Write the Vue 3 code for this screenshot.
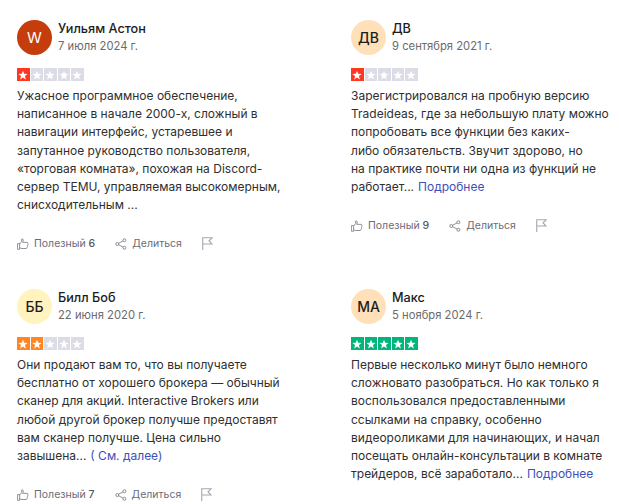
<template>
  <div class="reviews">
    <article v-for="r in reviews" :key="r.name" class="review">
      <header class="head">
        <div class="avatar" :class="r.tone">{{ r.initials }}</div>
        <div class="who">
          <div class="name">{{ r.name }}</div>
          <div class="date">{{ r.date }}</div>
        </div>
      </header>
      <div class="stars">
        <span v-for="n in 5" :key="n" class="star" :class="n <= r.rating ? 'on-' + r.rating : ''">
          <svg viewBox="0 0 24 24" width="10" height="10"><path fill="#fff" d="M12 1.5l2.9 7.6 8.1.4-6.3 5.1 2.1 7.9L12 18.1l-6.8 4.4 2.1-7.9L1 9.5l8.1-.4z"/></svg>
        </span>
      </div>
      <p class="text">
        <template v-for="(line, i) in r.lines" :key="i">{{ line }}<br v-if="i < r.lines.length - 1" /></template>
        <a v-if="r.more" class="more">{{ r.more }}</a>
      </p>
      <footer class="actions">
        <span class="act useful">
          <svg viewBox="0 0 16 16" width="12" height="12" fill="none" stroke="#6b6b78" stroke-width="1"><path d="M.5 7.5h3v7.5h-3zM3.5 8l2.7-3.2V1.6c0-.7 1.7-.8 2 .6.2 1-.2 2.6-.5 3.6h5.6c1.4 0 1.6 1.7.7 2.2.8.5.7 1.8-.2 2.1.5.7.3 1.7-.5 2 .3.9-.2 1.9-1.3 1.9H6.5c-1.2 0-2-.8-3-.8"/></svg>
          <span>Полезный <b>{{ r.useful }}</b></span>
        </span>
        <span class="act share">
          <svg viewBox="0 0 16 16" width="12" height="12" fill="none" stroke="#6b6b78" stroke-width="1"><circle cx="3" cy="8" r="2"/><circle cx="12.5" cy="3" r="2"/><circle cx="12.5" cy="13" r="2"/><path d="M4.8 7l5.9-3.1M4.8 9l5.9 3.1"/></svg>
          <span>Делиться</span>
        </span>
        <svg class="flag" viewBox="0 0 12 14" width="11" height="13" fill="none" stroke="#a6a6b4" stroke-width="1.2"><path d="M.8 14V.8h10.2L7.6 4l3.4 3.6H.8"/></svg>
      </footer>
    </article>
  </div>
</template>

<script setup>
const reviews = [
  {
    name: 'Уильям Астон',
    initials: 'W',
    tone: 'rust',
    date: '7 июля 2024 г.',
    rating: 1,
    useful: 6,
    lines: [
      'Ужасное программное обеспечение,',
      'написанное в начале 2000-х, сложный в',
      'навигации интерфейс, устаревшее и',
      'запутанное руководство пользователя,',
      '«торговая комната», похожая на Discord-',
      'сервер TEMU, управляемая высокомерным,',
      'снисходительным ...'
    ]
  },
  {
    name: 'ДВ',
    initials: 'ДВ',
    tone: 'peach',
    date: '9 сентября 2021 г.',
    rating: 1,
    useful: 9,
    lines: [
      'Зарегистрировался на пробную версию',
      'Tradeideas, где за небольшую плату можно',
      'попробовать все функции без каких-',
      'либо обязательств. Звучит здорово, но',
      'на практике почти ни одна из функций не',
      'работает...'
    ],
    more: 'Подробнее'
  },
  {
    name: 'Билл Боб',
    initials: 'ББ',
    tone: 'yellow',
    date: '22 июня 2020 г.',
    rating: 2,
    useful: 7,
    lines: [
      'Они продают вам то, что вы получаете',
      'бесплатно от хорошего брокера — обычный',
      'сканер для акций. Interactive Brokers или',
      'любой другой брокер получше предоставят',
      'вам сканер получше. Цена сильно',
      'завышена...'
    ],
    more: '( См. далее)'
  },
  {
    name: 'Макс',
    initials: 'МА',
    tone: 'peach',
    date: '5 ноября 2024 г.',
    rating: 5,
    useful: 0,
    lines: [
      'Первые несколько минут было немного',
      'сложновато разобраться. Но как только я',
      'воспользовался предоставленными',
      'ссылками на справку, особенно',
      'видеороликами для начинающих, и начал',
      'посещать онлайн-консультации в комнате',
      'трейдеров, всё заработало...'
    ],
    more: 'Подробнее'
  }
]
</script>

<style>
html, body {
  background: #fff;
  overflow: hidden;
}
</style>

<style scoped>
.reviews {
  display: grid;
  grid-template-columns: 334px 268px;
  grid-template-rows: 269px 269px;
  padding: 20px 0 0 17px;
  width: 619px;
  height: 504px;
  box-sizing: border-box;
  overflow: hidden;
  font-family: Inter, "Liberation Sans", sans-serif;
  color: #1c1c1c;
}

.review {
  display: flex;
  flex-direction: column;
}

.head {
  display: flex;
  gap: 6px;
  align-items: flex-start;
}

.avatar {
  width: 35px;
  height: 35px;
  border-radius: 50%;
  display: flex;
  align-items: center;
  justify-content: center;
  font-size: 14px;
  font-weight: 500;
  flex: none;
}

.avatar.rust {
  background: #c53d0c;
  color: #fff;
  font-size: 15px;
  font-weight: 400;
}

.avatar.peach {
  background: #ffe0b8;
}

.avatar.yellow {
  background: #fff3bf;
}

.name {
  font-size: 12.7px;
  font-weight: 500;
  line-height: 17px;
}

.date {
  font-size: 11.25px;
  color: #6b6b6b;
  line-height: 17px;
  margin-top: 1px;
}

.stars {
  display: flex;
  gap: 1px;
  margin-top: 13px;
}

.star {
  width: 12.5px;
  height: 13px;
  background: #dcdce6;
  display: flex;
  align-items: center;
  justify-content: center;
}

.on-1 {
  background: #ff3722;
}

.on-2 {
  background: #ff8622;
}

.on-5 {
  background: #00b67a;
}

.text {
  margin: 6px 0 0;
  font-size: 12px;
  line-height: 18.2px;
  color: #2f2f2f;
}

.more {
  color: #3d50b8;
  margin-left: 4px;
}

.actions {
  display: flex;
  align-items: center;
  margin-top: 22px;
  font-size: 10.5px;
  line-height: 16px;
  color: #6b6b78;
}

.act {
  display: flex;
  align-items: center;
  gap: 5px;
}

.useful b {
  font-weight: 500;
  color: #55555f;
}

.share {
  margin-left: 20px;
}

.flag {
  margin-left: 20px;
  margin-top: -2px;
}
</style>
